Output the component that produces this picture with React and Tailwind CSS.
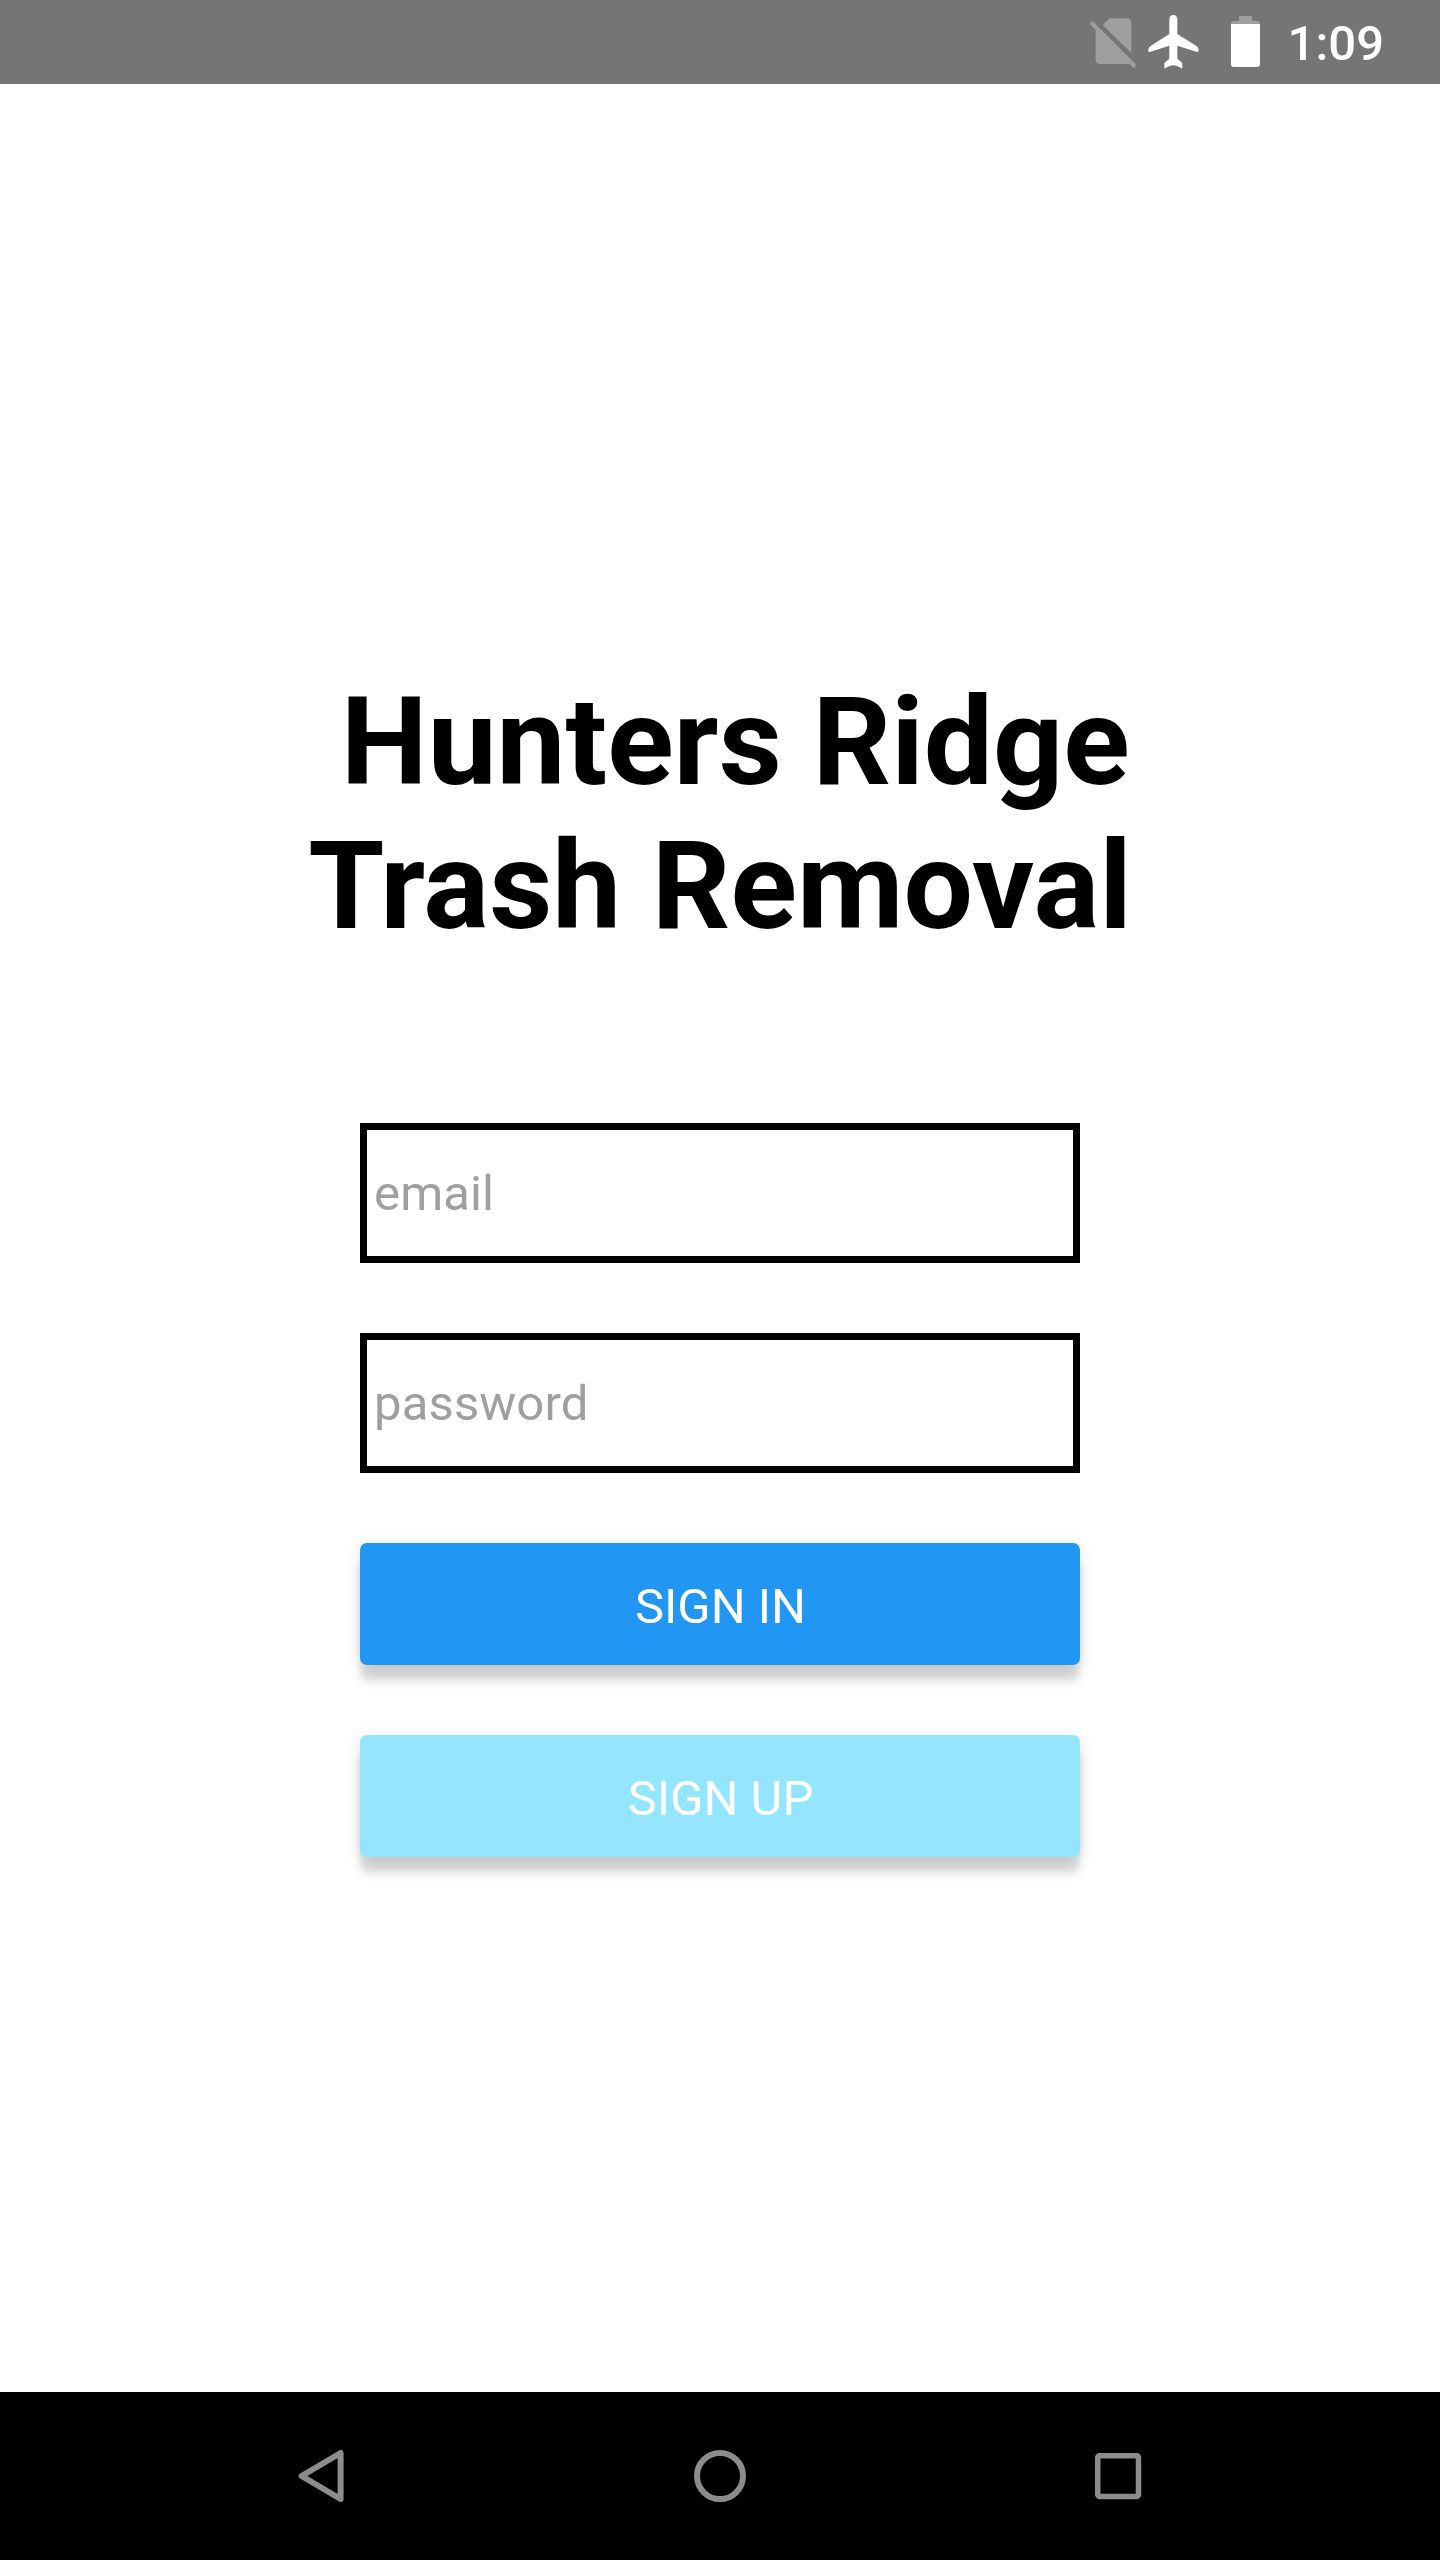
import React from "react";

function NoSimIcon() {
  return (
    <svg className="h-[50px] w-[46px]" viewBox="0 0 138 150" fill="#9f9f9f">
      <path d="M38 21 L54 5 Q58 1 64 1 H109 Q124 1 124 16 V105 Z" />
      <path d="M17 28 L126 137 L138 147 Q133 151 127 146 L119 138 H31 Q17 138 17 124 Z" />
      <path d="M7 17 L131 141" stroke="#9f9f9f" strokeWidth="12" strokeLinecap="round" />
    </svg>
  );
}

function AirplaneIcon() {
  return (
    <svg className="h-[54px] w-[51px]" viewBox="0 0 153 162" fill="#fff">
      <path d="M64 13 C64 -4 88 -4 88 13 V57 L144 92 Q152 97 152 104 Q152 113 147 111 L88 92 V127 C88 138 103 137 103 149 V157 Q103 161 99 159 C91 155 84 151 76 151 C68 151 61 155 53 159 Q49 161 49 157 V149 C49 137 64 138 64 127 V92 L5 111 Q0 113 1 104 Q1 97 9 92 L64 57 Z" />
    </svg>
  );
}

function BatteryIcon() {
  return (
    <svg className="h-[51px] w-[29px]" viewBox="0 0 87 153">
      <path d="M24 0 H63 V15 H79 Q87 15 87 23 V24 H0 V23 Q0 15 8 15 H24 Z" fill="#9f9f9f" />
      <path d="M0 24 H87 V145 Q87 153 79 153 H8 Q0 153 0 145 Z" fill="#fff" />
    </svg>
  );
}

function StatusBar() {
  return (
    <header className="flex h-[84px] items-start justify-end bg-[#757575] pr-14 text-white">
      <div className="mt-[18px]"><NoSimIcon /></div>
      <div className="mt-[15px] ml-[12.5px]"><AirplaneIcon /></div>
      <div className="mt-4 ml-[31.5px]"><BatteryIcon /></div>
      <span className="mt-[15px] ml-[28px] text-[49px] leading-[57px] font-medium">1:09</span>
    </header>
  );
}

function Field({ type, placeholder }) {
  return (
    <input
      type={type}
      placeholder={placeholder}
      className="block h-[140px] w-full border-[7px] border-black bg-white px-[7px] text-[49px] leading-[57px] tracking-[0.15px] text-black outline-none placeholder:text-[#9f9f9f]"
    />
  );
}

function Button({ className, children }) {
  return (
    <button
      type="button"
      className={
        "flex h-[122px] w-full items-center justify-center rounded-[7px] pt-[5px] pl-px text-[49px] leading-[57px] text-white shadow-[0_17px_10px_-1px_rgba(0,0,0,0.16),0_2px_16px_0_rgba(0,0,0,0.11)] " +
        className
      }
    >
      {children}
    </button>
  );
}

function NavigationBar() {
  return (
    <nav className="grid h-[168px] grid-cols-[398px_398px_398px] place-content-center place-items-center bg-black">
      <svg className="size-[60px]" viewBox="0 0 60 60" fill="none" stroke="#8c8c8c" strokeWidth="6" strokeLinejoin="round">
        <path d="M48.6 7 V53 L9.6 30 Z" />
      </svg>
      <svg className="size-[60px]" viewBox="0 0 60 60" fill="none" stroke="#8c8c8c" strokeWidth="6">
        <circle cx="30" cy="30" r="23" />
      </svg>
      <svg className="size-[60px]" viewBox="0 0 60 60" fill="none" stroke="#8c8c8c" strokeWidth="5.5">
        <rect x="9.7" y="9.7" width="40.8" height="40.8" rx="2" />
      </svg>
    </nav>
  );
}

export default function App() {
  return (
    <div className="flex h-[2560px] w-[1440px] flex-col bg-white font-['Roboto',sans-serif]">
      <StatusBar />
      <main className="flex flex-1 flex-col items-center pt-[586px]">
        <h1 className="text-center text-[123px] leading-[144px] font-bold whitespace-pre text-black">
          {" Hunters Ridge\nTrash Removal"}
        </h1>
        <form className="mt-[165px] flex w-[720px] flex-col gap-[70px]">
          <Field type="email" placeholder="email" />
          <Field type="password" placeholder="password" />
          <Button className="bg-[#2196f3]">SIGN IN</Button>
          <Button className="bg-[#94e5ff]">SIGN UP</Button>
        </form>
      </main>
      <NavigationBar />
    </div>
  );
}
